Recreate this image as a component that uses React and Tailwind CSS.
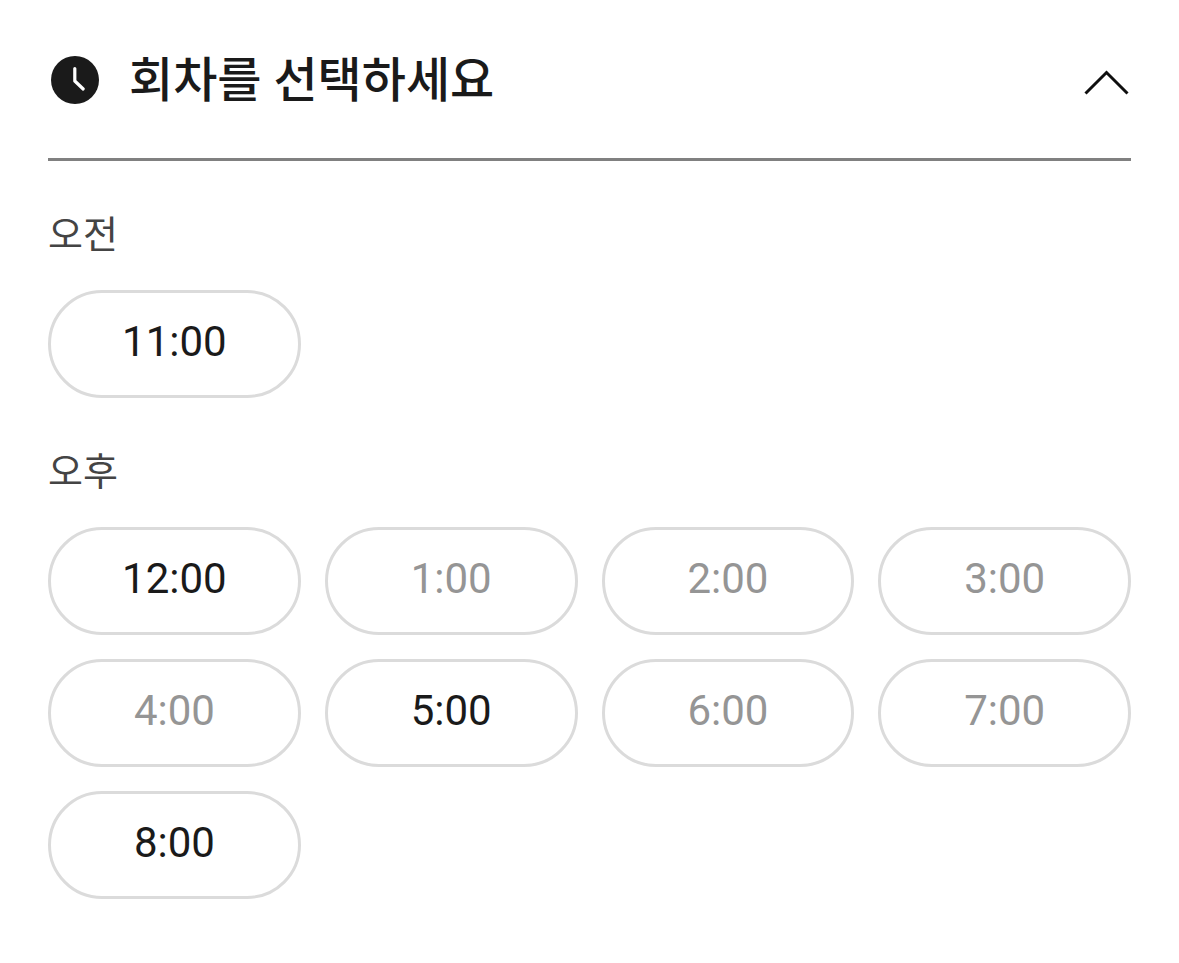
import React, { useState } from "react";

const sections = [
  { id: "am", label: "오전", slots: [{ time: "11:00", open: true }] },
  {
    id: "pm",
    label: "오후",
    slots: [
      { time: "12:00", open: true },
      { time: "1:00", open: false },
      { time: "2:00", open: false },
      { time: "3:00", open: false },
      { time: "4:00", open: false },
      { time: "5:00", open: true },
      { time: "6:00", open: false },
      { time: "7:00", open: false },
      { time: "8:00", open: true },
    ],
  },
];

const ClockIcon = () => (
  <svg className="size-12 shrink-0" viewBox="0 0 48 48" fill="none" aria-hidden="true">
    <circle cx="24" cy="24" r="24" fill="#1a1a1a" />
    <path
      d="M23.8 12.5V25l8.4 8"
      stroke="#fff"
      strokeWidth="3.2"
      strokeLinecap="round"
      strokeLinejoin="round"
    />
  </svg>
);

const ChevronIcon = ({ open }) => (
  <svg
    className={open ? "h-8 w-12" : "h-8 w-12 rotate-180"}
    viewBox="0 0 48 32"
    fill="none"
    aria-hidden="true"
  >
    <path d="M2.5 29.5L23.5 8.5l21 21" stroke="#0f0f0f" strokeWidth="3" />
  </svg>
);

const TimeSlot = ({ slot, selected, onSelect }) => (
  <button
    type="button"
    disabled={!slot.open}
    aria-pressed={selected}
    onClick={() => onSelect(slot.time)}
    className={`h-27 rounded-full border-3 pb-1 text-[42px] leading-none ${
      selected ? "border-[#1a1a1a]" : "border-[#dbdbdb]"
    } ${slot.open ? "text-[#1a1a1a]" : "text-[#959595]"}`}
  >
    {slot.time}
  </button>
);

const App = () => {
  const [open, setOpen] = useState(true);
  const [selectedTime, setSelectedTime] = useState("");

  return (
    <main className="min-h-screen bg-white px-12 pt-10 pb-16 font-[Roboto,'Noto_Sans_CJK_KR',sans-serif]">
      <h2 className="border-b-3 border-[#808080] pb-[38px]">
        <button
          type="button"
          aria-expanded={open}
          onClick={() => setOpen(!open)}
          className="flex h-20 w-full items-center pl-[3px] text-left"
        >
          <ClockIcon />
          <span className="ml-[30px] flex-1 pt-0.5 text-5xl leading-none font-medium text-[#1a1a1a]">
            회차를 선택하세요
          </span>
          <ChevronIcon open={open} />
        </button>
      </h2>

      {open &&
        sections.map((section) => (
          <section key={section.id} aria-labelledby={section.id} className="pt-[50px]">
            <h3 id={section.id} className="text-[38px] leading-[49px] text-[#444444]">
              {section.label}
            </h3>
            <div className="mt-[30px] grid grid-cols-4 gap-6">
              {section.slots.map((slot) => (
                <TimeSlot
                  key={slot.time}
                  slot={slot}
                  selected={selectedTime === slot.time}
                  onSelect={setSelectedTime}
                />
              ))}
            </div>
          </section>
        ))}
    </main>
  );
};

export default App;
